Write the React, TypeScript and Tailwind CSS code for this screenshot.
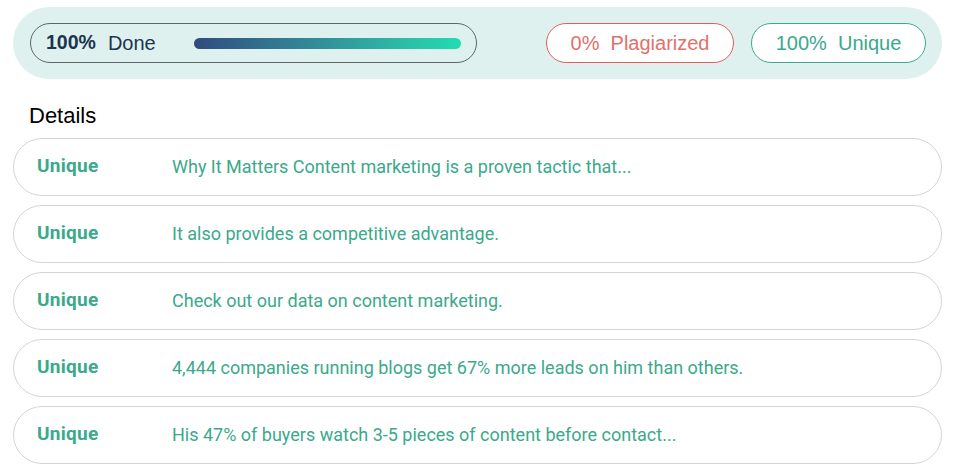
import React from "react";

const rows = [
  "Why It Matters Content marketing is a proven tactic that...",
  "It also provides a competitive advantage.",
  "Check out our data on content marketing.",
  "4,444 companies running blogs get 67% more leads on him than others.",
  "His 47% of buyers watch 3-5 pieces of content before contact...",
];

export default function App() {
  return (
    <div className="w-[964px] h-[469px] bg-white pt-[7px] pl-[13px] overflow-hidden">
      <div className="w-[929px] h-[72px] rounded-full bg-[#dff1ee] flex items-center pl-[17px] pr-[16px] font-['Liberation_Sans',Arial,sans-serif]">
        <div className="w-[447px] h-[40px] rounded-full border border-[#5d6668] flex items-center pl-[15px] pr-[15px] text-[19.5px] text-[#1b3550]">
          <span className="font-bold">100%</span>
          <span className="ml-[12px] text-[20px]">Done</span>
          <div className="ml-auto w-[267px] h-[11px] rounded-full bg-gradient-to-r from-[#2f4c7e] to-[#22dcb1]" />
        </div>
        <div className="ml-auto w-[188px] h-[40px] rounded-full border border-[#de5f58] bg-white flex items-center justify-center text-[20px] text-[#e2706b] whitespace-pre">
          {"0%  Plagiarized"}
        </div>
        <div className="ml-[17px] w-[175px] h-[40px] rounded-full border border-[#3ba98f] bg-white flex items-center justify-center text-[20px] text-[#3aa88e] whitespace-pre">
          {"100%  Unique"}
        </div>
      </div>
      <div className="mt-[24px] ml-[16px] text-[22px] leading-[26px] text-black font-['Liberation_Sans',Arial,sans-serif]">
        Details
      </div>
      <div className="mt-[9px] w-[929px] flex flex-col gap-[9px] font-['Roboto',sans-serif]">
        {rows.map((r, i) => (
          <div
            key={i}
            className="h-[58px] rounded-full border border-[#d5d5d5] bg-white flex items-center pl-[23px] pb-[1px] text-[18px] text-[#3ba98b]"
          >
            <span className="w-[135px] font-bold text-[19px] tracking-[0.3px]">Unique</span>
            <span>{r}</span>
          </div>
        ))}
      </div>
    </div>
  );
}
